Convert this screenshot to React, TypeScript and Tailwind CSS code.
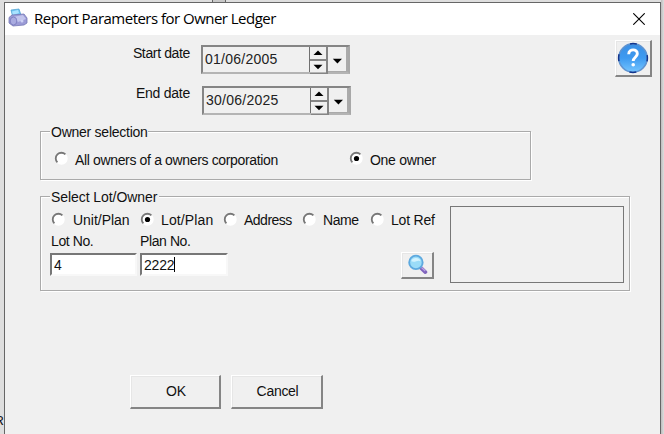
import React from 'react';

const bevel =
  'border-t border-l border-white border-b-2 border-r-2 border-b-[#858585] border-r-[#858585] bg-[#f0f0f0] shadow-[inset_1px_1px_0_#e6e6e6]';

function DateField({ value, className }: { value: string; className: string }) {
  return (
    <div
      className={`flex h-[29px] w-[149px] border-2 border-t-[#858585] border-l-[#858585] border-r-[#a8a8a8] border-b-[#b4b4b4] ${className}`}
    >
      <span className="flex-1 pt-[4px] pl-[2px] tracking-[0.26px] text-[#222]">{value}</span>
      <div className="flex w-[19px] flex-col border-l border-[#707070]">
        {['M4.5 8 9 3.4 13.5 8z', 'M4.5 3.7 9 8.3l4.5-4.6z'].map((d, i) => (
          <div key={d} className={`flex-1 border-r-2 border-b border-[#858585] ${i === 0 ? 'border-b-2' : ''}`}>
            <svg viewBox="0 0 18 12" className="-ml-px h-[12px] w-[18px]">
              <path d={d} fill="#000" />
            </svg>
          </div>
        ))}
      </div>
      <div className="w-[20px] border-r-2 border-b border-[#aaa] pt-[11px] pl-[4px]">
        <svg viewBox="0 0 10 6" className="h-[6px] w-[10px]">
          <path d="M.8.7h9.2L5.4 5.4z" fill="#000" />
        </svg>
      </div>
    </div>
  );
}

function Radio({ label, checked, className, text }: { label: string; checked?: boolean; className: string; text: string }) {
  return (
    <label className={`flex shrink-0 items-start ${className}`}>
      <svg viewBox="0 0 14 14" className="h-[14px] w-[14px] shrink-0">
        <circle cx="7.5" cy="7.5" r="5.5" fill="#fff" stroke="#fff" strokeWidth="1.4" />
        <path d="M3.4 11.4A5.5 5.5 0 0 1 11.4 3.4" fill="none" stroke="#777" strokeWidth="1.8" />
        {checked && <circle cx="7.5" cy="7.5" r="2.6" fill="#000" />}
      </svg>
      <span className={text}>{label}</span>
    </label>
  );
}

export default function App() {
  return (
    <div className="flex h-[434px] w-[664px] overflow-hidden bg-[#dedede] font-['Liberation_Sans',Arial,sans-serif] text-[14px] leading-[16px] text-[#111]">
      <div className="flex w-[4px] shrink-0 justify-end overflow-hidden pt-[413px] text-[13px]">R</div>
      <div className="flex h-full w-[657px] shrink-0 flex-col">
        <div className="flex h-[2px] shrink-0">
          <div className="w-[209px] border-r border-[#666]" />
          <div className="w-[13px] border-r border-[#666] bg-[#c8c8c8]" />
        </div>
        <main className="flex flex-1 flex-col border-x border-t border-[#666] bg-[#f0f0f0]">
          <header className="flex h-[32px] shrink-0 bg-white">
            <svg viewBox="0 0 20 20" className="mt-[5px] ml-[3px] h-[20px] w-[20px]">
              <path d="M3 2 11 1l2 6-8 3z" fill="#6fc5f2" stroke="#4a9fd0" strokeWidth=".7" />
              <path d="M4 3.5 10 2l1 3-6 2z" fill="#a9e3ff" />
              <path d="M1 9.5 4 7l12-1 3 4v5l-3 2-11 1-4-3z" fill="#9b9bd6" stroke="#7678b5" strokeWidth=".8" />
              <path d="m5 9 10-2 3 4-8 3z" fill="#c2c5ed" />
              <ellipse cx="5.5" cy="13" rx="3.3" ry="4" fill="#a9abe0" stroke="#7779bb" strokeWidth=".8" />
              <circle cx="14" cy="13" r="1.5" fill="#ced1f5" />
            </svg>
            <h1 className="mt-[4px] ml-[6px] flex-1 font-['Open_Sans',sans-serif] text-[15px] leading-[22px] tracking-[-0.52px] whitespace-nowrap text-black">
              Report Parameters for Owner Ledger
            </h1>
            <svg viewBox="0 0 12 12" className="mt-[10px] mr-[15px] h-[12px] w-[12px]">
              <path d="m.3.3 11.4 11.4m0-11.4L.3 11.7" stroke="#000" strokeWidth="1.1" />
            </svg>
          </header>

          <section className="flex h-[96px] shrink-0">
            <div className="flex w-[185px] flex-col items-end pt-[10px] whitespace-nowrap">
              <span className="tracking-[-0.36px]">Start date</span>
              <span className="mt-[24px] tracking-[-0.25px]">End date</span>
            </div>
            <div className="flex flex-1 flex-col pt-[10px] pl-[11px]">
              <DateField value="01/06/2005" className="" />
              <DateField value="30/06/2025" className="mt-[12px] ml-px" />
            </div>
            <button className={`mt-[5px] mr-[8px] flex h-[37px] w-[37px] items-center justify-center ${bevel}`}>
              <svg viewBox="0 0 32 32" className="h-[32px] w-[32px] shrink-0">
                <defs>
                  <linearGradient id="help" x1="0" y1="0" x2="0" y2="1">
                    <stop offset="0" stopColor="#3b8fe4" />
                    <stop offset=".5" stopColor="#3e9af0" />
                    <stop offset="1" stopColor="#75c5ff" />
                  </linearGradient>
                </defs>
                <circle cx="16" cy="16" r="14.2" fill="url(#help)" stroke="#5f93d0" strokeWidth="1.6" />
                <circle cx="16" cy="16" r="14.4" fill="none" stroke="#12348c" strokeWidth="1.5" strokeDasharray="7 15.62" strokeDashoffset="3.5" />
                <path d="M11.7 12.2c.2-5.8 8.9-5.5 8.6-.4-.2 3.3-4.1 3.6-4.1 7.2" fill="none" stroke="#fff" strokeWidth="2.9" />
                <circle cx="16.2" cy="22.8" r="1.8" fill="#fff" />
              </svg>
            </button>
          </section>

          <section className="ml-[35px] h-[49px] w-[491px] shrink-0 border border-[#aaa] shadow-[1px_1px_0_#fff,inset_1px_1px_0_#fff]">
            <h2 className="-mt-[8px] ml-[9px] w-[98px] bg-[#f0f0f0] pl-px tracking-[-0.25px] whitespace-nowrap">Owner selection</h2>
            <div className="mt-[11px] flex pl-[13px]">
              <Radio label="All owners of a owners corporation" className="w-[295px]" text="ml-[7px] pt-px tracking-[-0.35px] whitespace-nowrap" />
              <Radio label="One owner" checked className="" text="ml-[7px] pt-px tracking-[-0.28px] whitespace-nowrap" />
            </div>
          </section>

          <section className="mt-[16px] ml-[35px] flex h-[95px] w-[590px] shrink-0 border border-[#aaa] shadow-[1px_1px_0_#fff,inset_1px_1px_0_#fff]">
            <div className="w-[409px] shrink-0">
              <h2 className="-mt-[8px] ml-[9px] w-[109px] bg-[#f0f0f0] pl-px tracking-[-0.07px] whitespace-nowrap">Select Lot/Owner</h2>
              <div className="mt-[7px] flex pl-[10px] whitespace-nowrap">
                <Radio label="Unit/Plan" className="w-[89px]" text="ml-[8px] tracking-[-0.02px]" />
                <Radio label="Lot/Plan" checked className="w-[83px]" text="ml-[7px] tracking-[0.12px]" />
                <Radio label="Address" className="w-[79px]" text="ml-[7px] tracking-[-0.5px]" />
                <Radio label="Name" className="w-[68px]" text="ml-[7px] tracking-[-0.4px]" />
                <Radio label="Lot Ref" className="w-[80px]" text="ml-[7px] tracking-[-0.2px]" />
              </div>
              <div className="mt-[5px] flex pl-[9px]">
                <div className="w-[90px]">
                  <span className="ml-px block tracking-[-0.4px]">Lot No.</span>
                  <div className="mt-[4px] h-[23px] w-[87px] border-2 border-t-[#777] border-r-[#f8f8f8] border-b-[#f8f8f8] border-l-[#777] bg-white pt-[2px] pl-[2px]">4</div>
                </div>
                <div className="w-[88px]">
                  <span className="block tracking-[-0.4px] whitespace-nowrap">Plan No.</span>
                  <div className="mt-[4px] flex h-[23px] w-[88px] border-2 border-t-[#777] border-r-[#f8f8f8] border-b-[#f8f8f8] border-l-[#777] bg-white pt-[2px] pl-[2px]">
                    <span className="tracking-[-0.2px]">2222</span>
                    <span className="h-[15px] w-px bg-black" />
                  </div>
                </div>
                <button className={`mt-[19px] ml-[173px] flex h-[27px] w-[33px] shrink-0 items-start justify-center pt-px ${bevel}`}>
                  <svg viewBox="0 0 20 20" className="h-[21px] w-[21px] shrink-0">
                    <path d="m13 13 4.5 4.2" stroke="#8064bd" strokeWidth="3.6" strokeLinecap="round" />
                    <path d="m13.8 12.9 3.6 3.3" stroke="#b9a4e5" strokeWidth="1.2" />
                    <circle cx="8.5" cy="8" r="6.4" fill="#9bdcf8" stroke="#5da9df" strokeWidth="1.8" />
                    <path d="M4 7a4.8 4.8 0 0 1 9 0c-3-2-5 1.7-9 0z" fill="#d3f3ff" />
                  </svg>
                </button>
              </div>
            </div>
            <div className="mt-[9px] h-[77px] w-[174px] border border-[#777]" />
          </section>

          <footer className="mt-[84px] ml-[125px] flex gap-[10px]">
            <button className={`h-[34px] w-[91px] pb-px pl-[2px] ${bevel}`}>OK</button>
            <button className={`h-[34px] w-[92px] pb-px pl-[2px] tracking-[-0.3px] ${bevel}`}>Cancel</button>
          </footer>
        </main>
      </div>
      <div className="w-[3px] bg-gradient-to-r from-[#bdbdbd] to-[#dedede]" />
    </div>
  );
}
